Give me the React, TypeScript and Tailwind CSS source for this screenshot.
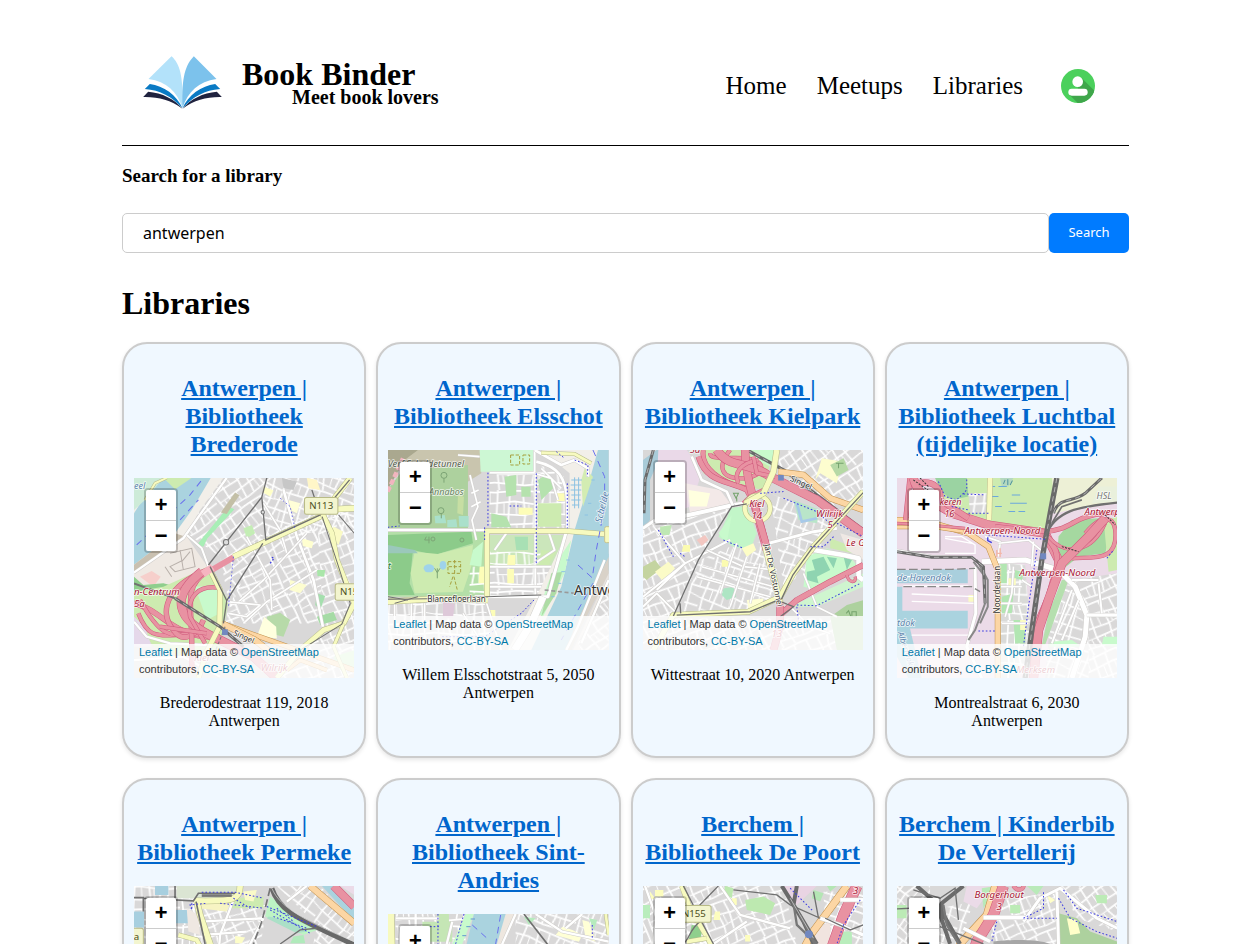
import type { ReactNode } from "react";

/* ---------- map drawing primitives ---------- */

const roadStyles = {
  motorway: { casing: "#d0597c", fill: "#e892a2", width: 20 },
  ramp: { casing: "#d0597c", fill: "#e892a2", width: 10 },
  primary: { casing: "#c08f4a", fill: "#fcd6a4", width: 15 },
  secondary: { casing: "#b5b98a", fill: "#f7fabf", width: 15 },
  street: { casing: "#cfcdca", fill: "#ffffff", width: 9 },
  lane: { casing: "#d2d0ce", fill: "#ffffff", width: 5 },
};

type RoadKind = keyof typeof roadStyles;

function Road({ d, kind = "street", w }: { d: string; kind?: RoadKind; w?: number }) {
  const s = roadStyles[kind];
  const width = w ?? s.width;
  return (
    <g fill="none" strokeLinejoin="round">
      <path d={d} stroke={s.casing} strokeWidth={width + 3} />
      <path d={d} stroke={s.fill} strokeWidth={width} />
    </g>
  );
}

function Area({ d, c }: { d: string; c: string }) {
  return <path d={d} fill={c} />;
}

function Rail({ d, w = 4 }: { d: string; w?: number }) {
  return <path d={d} fill="none" stroke="#707070" strokeWidth={w} />;
}

function MainRail({ d, w = 9 }: { d: string; w?: number }) {
  return (
    <g fill="none">
      <path d={d} stroke="#6a6a6a" strokeWidth={w} />
      <path d={d} stroke="#d8d8d8" strokeWidth={2} strokeDasharray="16 12" />
    </g>
  );
}

function Path({ d, w = 3 }: { d: string; w?: number }) {
  return <path d={d} fill="none" stroke="#3c3ce0" strokeWidth={w} strokeDasharray="5 6" />;
}

function Ferry({ d }: { d: string }) {
  return <path d={d} fill="none" stroke="#6a70ee" strokeWidth={3} strokeDasharray="20 16" />;
}

function Label({
  x,
  y,
  children,
  color = "#a81433",
  size = 29,
  italic = true,
  angle = 0,
  anchor = "start",
}: {
  x: number;
  y: number;
  children: ReactNode;
  color?: string;
  size?: number;
  italic?: boolean;
  angle?: number;
  anchor?: "start" | "middle" | "end";
}) {
  return (
    <text
      x={x}
      y={y}
      fill={color}
      fontSize={size}
      fontFamily="'Noto Sans', sans-serif"
      fontStyle={italic ? "italic" : "normal"}
      textAnchor={anchor}
      transform={`rotate(${angle} ${x} ${y})`}
      stroke="#ffffff"
      strokeOpacity={0.75}
      strokeWidth={5}
      strokeLinejoin="round"
      paintOrder="stroke"
    >
      {children}
    </text>
  );
}

function Shield({ x, y, w, children }: { x: number; y: number; w: number; children: ReactNode }) {
  return (
    <g>
      <rect x={x} y={y} width={w} height={50} rx={6} fill="#f3f5cf" stroke="#b9bb86" strokeWidth={3} />
      <text x={x + w / 2} y={y + 35} textAnchor="middle" fontSize={29} fontFamily="'Noto Sans', sans-serif" fill="#4c4e20">
        {children}
      </text>
    </g>
  );
}

function StreetPatterns() {
  const tiles = [
    { id: "streets-0", angle: 0 },
    { id: "streets-20", angle: 20 },
    { id: "streets-40", angle: 40 },
    { id: "streets-65", angle: 65 },
    { id: "streets-m20", angle: -22 },
    { id: "streets-m35", angle: -35 },
  ];
  return (
    <svg className="absolute size-0" aria-hidden="true">
      <defs>
        {tiles.map((t) => (
          <pattern key={t.id} id={t.id} width={180} height={150} patternUnits="userSpaceOnUse" patternTransform={`rotate(${t.angle})`}>
            <path
              d="M0 8L70 2L180 8M0 40L60 34L128 44L180 40M0 72L92 76M42 104L180 98M0 128L90 136L180 128M10 0L6 72L14 150M46 6L40 104L52 150M84 4L92 76L84 136M118 6L122 44L116 100M150 8L142 42L152 150M118 100L112 132"
              fill="none"
              stroke="#fff"
              strokeWidth={5}
            />
            <path d="M6 104L42 104M92 76L144 66L180 72M64 36L66 74M28 40V72M102 44L104 74M166 8V40M66 104L68 134M132 100L134 130M24 106L28 130" fill="none" stroke="#fff" strokeWidth={3} />
          </pattern>
        ))}
      </defs>
    </svg>
  );
}

/* ---------- maps ---------- */

function BrederodeMap() {
  return (
    <>
      <Area d="M42 24H702V624H42Z" c="#d9d8d8" />
      <Area d="M230 24H460L420 200L330 420L300 260L200 190Z" c="url(#streets-m35)" />
      <Area d="M440 24H702V180L420 200Z" c="url(#streets-20)" />
      <Area d="M420 200L590 130L610 460L310 460L340 380Z" c="url(#streets-65)" />
      <Area d="M590 130H702V624H470L610 470Z" c="url(#streets-m20)" />
      <Area d="M42 24H310L240 120L200 190L42 310Z" c="#f2efe9" />
      <Area d="M42 130L110 24H272L215 120L165 190L42 284Z" c="#aad3df" />
      <Area d="M42 24H130L75 90L42 120Z" c="#cdebd8" />
      <Area d="M130 24H215L165 58Z" c="#cdebb0" />
      <Area d="M42 284L165 190L190 198L60 300L42 305Z" c="#c9c0b0" />
      <Area d="M42 310L200 200L262 290L210 350L100 370L42 350Z" c="#efe9e3" />
      <Area d="M60 320L95 303L122 320L100 350Z" c="#f6cfcb" />
      <Area d="M42 320L70 345L130 340L185 355L150 390L42 370Z" c="#8fce8d" />
      <Area d="M230 225L325 110L343 118L262 205L250 230Z" c="#a8eeb6" />
      <Area d="M302 128L345 68L358 76L320 132Z" c="#c3bfa6" />
      <Area d="M42 365L130 350L262 290L325 390L300 540L190 560L100 530L42 440Z" c="#cdebb0" />
      <Area d="M225 350L290 345L300 430L260 450Z" c="#c8facc" />
      <Area d="M42 440L75 470L95 530H42Z" c="#e5d8ea" />
      <Area d="M440 440L480 428L510 450L490 500L450 490Z" c="#b7daa9" />
      <Area d="M412 495L432 440L468 470L470 505L430 500Z" c="#ffffdf" />
      <Area d="M590 370L615 378L600 420L585 405Z" c="#a5dfae" />
      <Area d="M590 440L640 425L650 450L600 465Z" c="#a5dba5" />
      <Area d="M560 24L590 30L600 60L565 55Z" c="#fff6c8" />
      <Area d="M505 90L540 100L530 130L500 115Z" c="#ffffd8" />
      <Area d="M430 50L460 62L450 80L428 68Z" c="#ffffc8" />
      <Area d="M370 175L395 165L405 190L380 205Z" c="#c4edb5" />
      <Area d="M640 170L668 185L655 225L630 200Z" c="#fbfbc5" />
      <Area d="M545 205L580 215L575 235L548 228Z" c="#ffffd0" />
      <Area d="M590 300L615 300L612 320L592 318Z" c="#a9e6a9" />
      <Area d="M510 330L560 345L540 370L508 360Z" c="#fdfdd0" />
      <Area d="M485 24L530 35L520 60L490 55Z" c="#c7c7c7" />
      <Area d="M640 560L702 540V600H660Z" c="#c8f0c0" />
      <Ferry d="M50 225L150 130L210 75L250 24" />
      <Ferry d="M180 150L235 90" />
      <Road d="M42 308L190 205L250 120L320 24" w={7} />
      <Road d="M75 90L105 40L140 24" kind="secondary" w={6} />
      <g fill="none" stroke="#b8b0aa" strokeWidth={3}>
        <path d="M150 250L215 235L225 290L165 305L150 290L190 270M180 240L190 300M210 245L185 275M135 290L155 320" />
      </g>
      <Road d="M42 455L80 500L150 520L270 525" w={7} />
      <Road d="M200 195L245 235L265 290" w={6} />
      <Road d="M42 570L190 560L300 620" w={7} />
      <Road d="M490 60L530 200L580 330L608 470" w={8} />
      <Road d="M430 100L480 180L500 250" kind="lane" />
      <Road d="M350 400L430 330L560 190" kind="lane" />
      <Road d="M370 460L440 395L590 300" kind="lane" />
      <Road d="M320 395L420 405L380 440L325 430" kind="lane" />
      <Road d="M380 200L450 330L455 420" kind="lane" />
      <Road d="M42 400C130 420 160 510 300 500" kind="motorway" w={14} />
      <Road d="M55 430C90 520 120 490 240 495" kind="ramp" />
      <Road d="M60 390C120 500 150 500 210 490" kind="ramp" />
      <Road d="M262 300C130 350 120 430 160 480C190 525 235 490 250 450" kind="ramp" w={13} />
      <Road d="M260 305C190 350 215 400 215 520V600" kind="motorway" w={13} />
      <Road d="M245 305C150 380 165 450 290 505L400 560L470 624" kind="motorway" w={24} />
      <Road d="M295 353C235 345 200 380 210 440L255 520" kind="ramp" />
      <Road d="M120 470L260 490" kind="ramp" />
      <Road d="M305 460L702 600" kind="primary" w={13} />
      <Road d="M305 460L405 510L455 550" kind="primary" w={17} />
      <Road d="M500 600L540 570L620 600" kind="primary" w={10} />
      <Road d="M270 300L300 360L298 470L260 545L235 624" kind="secondary" w={14} />
      <Road d="M340 260L600 140L690 24" kind="secondary" w={15} />
      <Road d="M600 120L702 115" kind="secondary" w={16} />
      <Road d="M606 130L635 190L650 270L702 400L670 460L610 480L540 540L470 624" kind="secondary" w={14} />
      <Road d="M670 460L640 530L680 624" kind="secondary" w={9} />
      <path d="M275 300L340 262" stroke="#e892a2" strokeWidth={18} />
      <path d="M248 312L278 292" stroke="#f6b4c0" strokeWidth={22} />
      <MainRail d="M165 385L300 470L370 530" />
      <Rail d="M42 340L165 385" w={6} />
      <Rail d="M265 285L318 217L425 82L440 24M425 82L437 210L600 135L688 30M428 220L320 392L270 290M320 392L310 460M600 135L575 60" />
      <Rail d="M606 140L650 275L690 400L665 462L540 540M655 135L702 190" w={3} />
      <path d="M315 470L285 545" stroke="#777" strokeWidth={3} strokeDasharray="10 6" />
      <g fill="#ddd" stroke="#777" strokeWidth={3}>
        <circle cx={318} cy={217} r={8} />
        <circle cx={428} cy={127} r={5} />
      </g>
      <Path d="M480 85L510 110L525 180M340 260L325 410" w={2} />
      <Path d="M450 280L462 265L455 262" w={4} />
      <rect x={306} y={478} width={17} height={17} fill="#7188c0" />
      <Shield x={553} y={83} w={100}>N113</Shield>
      <Shield x={645} y={341} w={100}>N155</Shield>
      <Label x={42} y={58} color="#5b83ad" size={27}>eel</Label>
      <Label x={42} y={375}>n-Centrum</Label>
      <Label x={42} y={411}>5a</Label>
      <Label x={338} y={494} color="#333" italic={false} size={23} angle={24}>Singel</Label>
      <Label x={222} y={572}>Kiel</Label>
      <Label x={422} y={602}>Wilrijk</Label>
    </>
  );
}

function ElsschotMap() {
  return (
    <>
      <Area d="M39 30H702V630H39Z" c="#d9d8d8" />
      <Area d="M39 30H320V100L240 150L39 70Z" c="#c9c5ae" />
      <Area d="M39 150L100 70L180 85L280 75V265H39Z" c="#add19e" />
      <Area d="M39 150L90 60L130 30H39Z" c="#aaa88f" />
      <Area d="M315 30H480V95H318Z" c="#cdf7d4" />
      <Area d="M39 275H335V470H39Z" c="#b4dfa8" />
      <Area d="M39 285L290 275L295 310L180 345L115 330L105 430L120 465H39Z" c="#8ccb8a" />
      <Area d="M120 335L190 342L295 315L290 380L265 455L120 460L108 400Z" c="#cdebb0" />
      <Area d="M39 315L120 330L130 340H39Z" c="#9bc8bb" />
      <Area d="M295 330L325 305L320 380L285 375Z" c="#c8facc" />
      <Area d="M180 228L210 225L215 250H182ZM218 240L245 238L248 262H218ZM252 228H282V260H254Z" c="#aae0cb" />
      <Area d="M250 165L268 170L265 225L248 220Z" c="#c7dea3" />
      <Area d="M345 285H575L530 380H345Z" c="#cbe6bb" />
      <Area d="M345 100H480V265H345Z" c="url(#streets-0)" />
      <Area d="M485 70L570 110L575 265H485Z" c="url(#streets-0)" />
      <Area d="M345 335H520V470H345Z" c="url(#streets-0)" />
      <Area d="M285 380H330V460H285Z" c="url(#streets-0)" />
      <Area d="M39 490H330L360 630H39Z" c="url(#streets-0)" />
      <Area d="M205 485L240 492L235 535H205Z" c="#dec9d9" />
      <Area d="M500 30H700L680 240L600 450L520 630H400L500 440L585 260V100Z" c="#f2efe9" />
      <Area d="M670 30H702V355L590 630H470L560 440L600 270L645 120Z" c="#aad3df" />
      <Area d="M550 360L590 300L570 400L505 530L490 520L520 430Z" c="#c8facc" />
      <Area d="M530 400L562 396L545 460L500 530Z" c="#aedca5" />
      <Area d="M630 85L655 110L625 200L620 120Z" c="#d3ecb2" />
      <Area d="M595 630L702 400V630Z" c="#e9e4df" />
      <Area d="M610 610L702 440V630H620Z" c="#d9d8d8" />
      <Area d="M610 610L702 440V630H620Z" c="url(#streets-m35)" />
      <Area d="M540 630L600 470L702 340V390L600 600L580 630Z" c="#aad3df" />
      <Area d="M600 560L702 350V400L620 560L590 630H575Z" c="#d9d2c8" />
      <Area d="M432 203H474V224H432ZM547 160H570V183H547ZM400 345H422V375H398ZM398 387H418V430H398ZM345 510H362V532H345ZM315 380H328V430H312Z" c="#fdfdb8" />
      <Area d="M390 110L425 105V165L395 170ZM440 140H468V170H440ZM350 220L395 230L410 262H350ZM490 120L520 100L540 140L500 180Z" c="#b5e2ae" />
      <Area d="M490 190H560V260H490ZM500 330L545 335L520 380H490Z" c="#cdebb0" />
      <Area d="M420 290H460V330H425Z" c="#a8e0b4" />
      <g fill="#9fd3ea">
        <ellipse cx={163} cy={385} rx={16} ry={12} />
        <ellipse cx={205} cy={376} rx={10} ry={13} />
      </g>
      <g fill="none" stroke="#a6a13f" strokeWidth={3} strokeDasharray="10 5">
        <path d="M220 365H258V400H220ZM222 380H258M240 360V400M235 410L225 440M238 410L248 450" />
        <path d="M408 45H435V75H408ZM445 45H465V72H445Z" />
      </g>
      <g stroke="#8cc2e2" strokeWidth={3}>
        <path d="M590 120H622M588 135H620M588 150H620M590 165H618M590 180H618M592 195H614M600 112V205M612 112V205" />
        <path d="M640 190H650M630 225H640M575 360H585M560 395H572M550 430H560M530 470H540M650 120H660" />
      </g>
      <g fill="none" stroke="#7da576" strokeWidth={3}>
        <circle cx={208} cy={106} r={9} />
        <path d="M208 115V128M200 222V235" />
        <circle cx={199} cy={212} r={9} />
        <path d="M155 290L150 300H165M163 290V310M188 385V415M180 385L188 398L196 385" />
        <circle cx={175} cy={297} r={6} />
        <circle cx={262} cy={300} r={6} />
      </g>
      <path d="M39 155L85 55" stroke="#f2b5bf" strokeWidth={13} strokeDasharray="16 8" />
      <Road d="M39 270H335" w={8} />
      <Road d="M286 105L310 200L292 240L305 300M290 160L312 150M290 200L318 185M250 45L315 50" kind="lane" />
      <Road d="M345 98H480V30M482 98V470" w={6} />
      <Road d="M485 65C550 80 575 110 578 190V270" kind="street" w={8} />
      <Road d="M480 100L530 115L550 180M500 85L560 145" kind="lane" />
      <Road d="M345 380H530M345 440H500M395 280L360 330M520 270L540 330L480 370" kind="lane" w={6} />
      <Road d="M480 30L560 75L600 60L640 85L640 110" w={8} />
      <Road d="M300 470H520L575 275" w={9} />
      <Road d="M505 470L470 550L420 630" w={22} />
      <Road d="M690 360L610 560L575 630M702 420L620 610" w={7} />
      <Road d="M330 470L380 630M265 520L330 620M60 490V560M110 490V600M150 490V580" kind="lane" />
      <Road d="M337 470V273H575L690 282" kind="secondary" w={14} />
      <Road d="M39 485L200 475L340 480" kind="secondary" w={16} />
      <Road d="M500 38L600 42L650 70" kind="secondary" w={9} />
      <rect x={690} y={260} width={20} height={48} rx={5} fill="#f7fabf" stroke="#c7c390" strokeWidth={3} />
      <Rail d="M39 478L180 476L400 468L500 465M39 470L100 480M60 490L130 470" w={3} />
      <path d="M510 450L600 460" stroke="#999" strokeWidth={5} strokeDasharray="12 8" />
      <Path d="M340 98V262M485 100V370M330 262V300M600 60L640 75L638 110M405 198H440M39 262L75 258M545 35L570 55M578 130V265M478 480L440 520L330 590L200 590" />
      <Ferry d="M655 30L690 110V200L665 330L655 400M610 375L660 420M655 430L560 600" />
      <Label x={39} y={80} color="#55614f" size={28}>Verf Scheldetunnel</Label>
      <Label x={163} y={165} color="#66825d" size={27}>Annabos</Label>
      <Label x={680} y={250} color="#5b83ad" size={28} angle={-76}>Schelde</Label>
      <Label x={39} y={388} color="#1f7a3d">t</Label>
      <Label x={158} y={486} color="#333" italic={false} size={24}>Blancefloerlaan</Label>
      <Label x={598} y={466} color="#333" italic={false} size={42}>Antwerpen</Label>
    </>
  );
}

function KielparkMap() {
  return (
    <>
      <Area d="M39 30H699V630H39Z" c="#d9d8d8" />
      <Area d="M39 250L300 200L210 360L130 530H39Z" c="url(#streets-m20)" />
      <Area d="M300 320L420 300L450 480L380 510L150 520L210 360Z" c="url(#streets-20)" />
      <Area d="M420 160L620 240L520 400L460 440Z" c="url(#streets-20)" />
      <Area d="M440 30H699V180L600 200L450 90Z" c="url(#streets-m35)" />
      <Area d="M39 535H699V630H39Z" c="url(#streets-m20)" />
      <Area d="M39 60L80 30H100L60 120V240L39 270Z" c="#a9cbd8" />
      <Area d="M85 30H170L215 100L180 200L75 240Z" c="#ead9e8" />
      <Area d="M165 130L270 150L300 190L180 220Z" c="#f3e9e8" />
      <Area d="M175 150L240 160L230 200L180 200Z" c="#ffffdf" />
      <Area d="M210 30H430L400 150L300 130L220 100Z" c="#cdebb0" />
      <Area d="M345 30H440L420 80L380 60Z" c="#c8facc" />
      <Area d="M305 200L350 195L380 280L360 330L310 320L265 290Z" c="#c2f6c8" />
      <Area d="M265 280L305 225L290 310Z" c="#c8facc" />
      <Area d="M200 300L225 285L235 300L215 318Z" c="#f3c7c1" />
      <Area d="M90 260L125 255L118 285L92 285Z" c="#bfe8b4" />
      <Area d="M39 380L75 360L95 385L50 420L39 410Z" c="#c4d4a0" />
      <Area d="M75 395L115 365L135 385L100 425Z" c="#fbfbc7" />
      <Area d="M160 315H180V335H155ZM275 360H295V380H275Z" c="#fbfbb0" />
      <Area d="M335 325L370 310L378 330L350 350Z" c="#fdfdc6" />
      <Area d="M280 445L310 440L318 470L290 480L275 465Z" c="#aee5c4" />
      <Area d="M350 480L400 475L395 500L355 505Z" c="#ffffd6" />
      <Area d="M490 180L570 210L560 250L505 240Z" c="#b9e5c9" />
      <path d="M500 190L515 245L560 235" fill="none" stroke="#a7c9e8" strokeWidth={8} />
      <Area d="M575 55L635 65L620 130L570 100L555 120Z" c="#fdfdcf" />
      <Area d="M600 75L640 55L655 90L620 110Z" c="#b6d9a5" />
      <Area d="M530 350L590 325L660 350L690 390L560 450L520 440Z" c="#c8facc" />
      <Area d="M545 360L580 350L600 390L560 410ZM590 350L620 355L610 385ZM530 395L555 390L565 430L530 420ZM640 350L665 360L650 390Z" c="#8fd4b1" />
      <Area d="M600 295L640 310L690 345L600 325Z" c="#cdebb0" />
      <Area d="M480 500L699 400V440L560 500Z" c="#cff5cf" />
      <Area d="M600 530L650 495L699 480V630H620Z" c="#add19e" />
      <Area d="M630 280L699 300V360L650 330Z" c="#efe8e4" />
      <MainRail d="M350 30L460 90L699 270" w={10} />
      <MainRail d="M70 30L45 120L42 220" w={9} />
      <Road d="M60 250L200 220L310 195L350 190" w={12} />
      <Road d="M39 265L75 240" w={9} />
      <Road d="M185 50L215 120L290 155L310 200" w={8} />
      <Road d="M75 265L165 370L80 450M165 370L300 300M39 470L165 370M140 520L80 460L39 500" w={6} />
      <Road d="M395 315L550 275L620 265" w={9} />
      <Road d="M550 330L640 345L685 355V410L699 420" w={14} />
      <Road d="M230 330L340 380L440 390M215 380L430 440M200 410L420 470" kind="lane" />
      <Road d="M320 310L270 460M350 350L300 500M390 370L360 490" kind="lane" />
      <Road d="M520 400L560 500L620 530M470 490L540 560L600 580" kind="lane" />
      <Road d="M220 30C210 80 270 130 350 145" kind="ramp" w={12} />
      <Road d="M205 50C230 130 290 120 350 150L372 190" kind="ramp" w={14} />
      <Road d="M300 30C260 80 270 120 345 115C400 110 420 60 340 55C280 50 240 60 240 40" kind="ramp" />
      <Road d="M345 30C345 100 360 130 372 190L410 330" kind="motorway" w={22} />
      <Road d="M260 30C300 90 350 60 420 110L560 180L699 280" kind="motorway" w={24} />
      <Road d="M385 60C330 70 310 100 325 130" kind="ramp" />
      <Road d="M400 150L360 170L340 190" kind="ramp" />
      <Road d="M435 110L380 100L370 50" kind="ramp" />
      <Road d="M699 375L600 425L500 480L450 525" kind="motorway" w={15} />
      <Road d="M650 405C655 430 680 430 675 410" kind="ramp" w={7} />
      <Road d="M450 490V560L430 630" kind="motorway" w={20} />
      <Road d="M445 95L520 105L600 175L699 210" kind="primary" w={16} />
      <circle cx={382} cy={205} r={38} fill="none" stroke="#b5b98a" strokeWidth={15} />
      <circle cx={382} cy={205} r={38} fill="none" stroke="#f7fabf" strokeWidth={12} />
      <Road d="M440 30L430 95L400 160L345 190" kind="secondary" w={16} />
      <Road d="M372 190L410 320" kind="motorway" w={18} />
      <Road d="M405 315L450 490" kind="secondary" w={18} />
      <Road d="M699 155L550 320L490 400L450 470L355 515L130 525L70 630" kind="secondary" w={15} />
      <Rail d="M350 192L305 200L205 360L130 528M699 158L545 325L488 405L455 475L360 515L140 525M150 490L152 520M440 480L490 500L450 530" w={4} />
      <Path d="M280 300L340 325M460 175L560 215L610 260M620 250L699 290M500 495L560 497L690 430M610 290L580 320L540 320M500 500L505 540M85 270L130 350M150 340L165 350M390 160L460 155" />
      <rect x={444} y={105} width={17} height={17} fill="#7188c0" />
      <g fill="none" stroke="#74a26c" strokeWidth={3}>
        <path d="M310 160H325L318 175ZM320 175V185M617 70H640M625 70V85M648 520L655 512L662 530M665 515H678V530H665Z" />
      </g>
      <Label x={178} y={40}>5a</Label>
      <Label x={380} y={202} anchor="middle">Kiel</Label>
      <Label x={380} y={236} anchor="middle">14</Label>
      <Label x={598} y={230} anchor="middle">Wilrijk</Label>
      <Label x={600} y={265} anchor="middle">5</Label>
      <Label x={648} y={317}>Le Grellelaan</Label>
      <Label x={478} y={122} color="#333" italic={false} size={24} angle={24}>Singel</Label>
      <Label x={402} y={314} color="#333" italic={false} size={24} angle={78}>Jan De Vostunnel</Label>
      <Label x={440} y={560} anchor="middle">Vosges</Label>
      <Label x={440} y={592} anchor="middle">13</Label>
    </>
  );
}

function LuchtbalMap() {
  return (
    <>
      <Area d="M36 24H696V624H36Z" c="#ebdbe8" />
      <Area d="M160 24H520L480 190L330 170L180 110Z" c="#cdebb0" />
      <Area d="M150 24H245L250 80L200 90L165 60Z" c="#9bd3a2" />
      <Area d="M250 70H305V130H255Z" c="#d9d8d8" />
      <Area d="M250 70H305V130H255Z" c="url(#streets-0)" />
      <Area d="M500 24H696V100L600 110L510 130Z" c="#edf0d6" />
      <Area d="M640 50H696V95L620 100Z" c="#e9f0dc" />
      <Area d="M345 24H385L370 50H350Z" c="#b5d8c0" />
      <Area d="M520 200L560 150L640 145L680 170L660 250L580 260L530 300L515 270Z" c="#a5d8a0" />
      <Area d="M655 150L696 140V300L670 305Z" c="#cdebb0" />
      <Area d="M340 275L420 285L440 530L400 624H345Z" c="#d9dad8" />
      <Area d="M340 275L420 285L440 530L400 624H345Z" c="url(#streets-0)" />
      <Area d="M345 275H365V340H345ZM350 380L385 370L380 430L350 430ZM390 300L412 305V330L388 325ZM385 450H420V520H390Z" c="#b2e6b2" />
      <Area d="M405 450H422V480H405ZM370 325H392V345H370ZM250 375H268V395H250Z" c="#fbfbc2" />
      <Area d="M500 400L560 330L696 310V624H480Z" c="#d9d8d8" />
      <Area d="M500 400L560 330L610 420V624H480Z" c="url(#streets-20)" />
      <Area d="M560 330L696 310V624H610V430Z" c="url(#streets-m20)" />
      <Area d="M490 430L530 330L550 330L500 470L480 524H470Z" c="#b5dfae" />
      <Area d="M655 500L696 500V530L650 525ZM500 515L560 510L590 530H490Z" c="#c8facc" />
      <Area d="M36 300H165V298H248V340H36Z" c="#a9cfdd" />
      <Area d="M36 350H52V422H248V475H75L110 624H70L36 560Z" c="#aad3df" />
      <g fill="none" stroke="#6ba8dc" strokeWidth={3}>
        <path d="M340 50H365M320 80H340M380 75H405M375 100H425M330 110H350M370 125H390M400 125H420M310 50H330" />
      </g>
      <path d="M355 42L360 30M368 45V28M375 45L382 32" stroke="#4f93a0" strokeWidth={3} />
      <g fill="none" stroke="#fff" strokeWidth={4}>
        <path d="M80 372L268 380M80 394L268 400M80 495H250M180 205L260 220M180 250H270V225L230 200H180M36 320H80M55 348H250" />
      </g>
      <Road d="M36 240L140 258L250 262" w={5} />
      <Road d="M270 290L272 430L245 530L290 624" w={9} />
      <Road d="M290 275L420 270L520 300L570 350L605 435L600 500L560 624" w={15} />
      <Road d="M605 435H696" w={10} />
      <Road d="M300 200L345 215L340 260" w={6} />
      <Road d="M385 290L380 370L360 440M345 350H410M345 400H410M350 460H430M410 330L440 350" kind="lane" />
      <Road d="M340 220L430 210L480 250M445 215L440 290" kind="lane" />
      <Road d="M560 360L500 520M580 390L530 510M640 340L650 430M560 330L640 330" kind="lane" w={6} />
      <g fill="none" stroke="#888" strokeWidth={6}>
        <path d="M36 298H200L270 295M55 350H260L285 365" strokeDasharray="26 10" strokeWidth={4} />
        <path d="M265 275L300 320V400L270 480L250 510M275 270L308 330V410L285 460" />
      </g>
      <MainRail d="M36 245L140 262L260 262L295 290L300 400" w={9} />
      <Road d="M315 24L312 150" kind="secondary" w={14} />
      <Road d="M36 150H110L250 190L310 230L338 300V624" kind="primary" w={15} />
      <Road d="M36 172H150L235 185" kind="primary" w={9} />
      <Road d="M75 24L62 150" kind="motorway" w={13} />
      <Road d="M85 24C100 90 160 100 200 130L310 165L480 190L530 290" kind="motorway" w={24} />
      <Road d="M100 40C150 30 170 60 165 90L250 145" kind="motorway" w={16} />
      <Road d="M36 160L130 165L240 175" kind="ramp" w={6} />
      <Road d="M330 170L480 185C560 180 560 140 660 130L696 128" kind="ramp" w={12} />
      <Road d="M480 190C500 230 520 230 515 290L490 380L455 460L440 624" kind="motorway" w={15} />
      <Road d="M490 200C540 260 620 250 660 160" kind="ramp" w={8} />
      <Road d="M560 265C620 260 700 280 690 180C685 140 650 130 600 190" kind="ramp" />
      <Road d="M660 145L610 200L530 280L490 390L460 480L445 624" kind="motorway" w={25} />
      <MainRail d="M515 24L495 130L470 270L450 410L420 624" w={16} />
      <MainRail d="M505 130C520 80 560 100 600 70L650 24" w={9} />
      <Rail d="M480 200C510 120 580 110 696 98" w={7} />
      <Rail d="M500 160L530 110L590 90" w={5} />
      <g stroke="#333" strokeWidth={3} strokeDasharray="6 4">
        <path d="M85 30L135 65M105 24L130 50M660 135L690 165M530 230L580 245" />
      </g>
      <Path d="M160 35L180 80L215 90L245 60V24M235 72L300 75M250 130H310M310 195L480 208M455 240L430 410L415 530M280 483H330M665 265L685 240M200 110L250 120" />
      <path d="M308 202V212L320 218" fill="none" stroke="#3c3ce0" strokeWidth={4} />
      <rect x={465} y={250} width={18} height={18} fill="#7188c0" />
      <path d="M335 240V262M345 235V262M335 250H350" stroke="#f3b6a8" strokeWidth={4} />
      <Label x={164} y={106} size={27}>keren</Label>
      <Label x={178} y={141} size={27}>16</Label>
      <Label x={238} y={191}>Antwerpen-Noord</Label>
      <Label x={403} y={317}>Antwerpen-Noord</Label>
      <Label x={598} y={136}>Antwerpen</Label>
      <Label x={634} y={86} color="#777" size={27}>HSL</Label>
      <Label x={36} y={334} color="#5b83ad" size={28}>de Havendok</Label>
      <Label x={36} y={469} color="#5b83ad" size={27}>tdok</Label>
      <Label x={38} y={488} color="#5b83ad" size={25} angle={72}>Albertdok</Label>
      <Label x={345} y={430} color="#333" italic={false} size={24} angle={-90}>Noorderlaan</Label>
      <Label x={393} y={608}>Merksem</Label>
    </>
  );
}

function PermekeMap() {
  return (
    <>
      <Area d="M42 333H702V933H42Z" c="#d9d8d8" />
      <Area d="M42 333H240L250 507V933H42Z" c="url(#streets-0)" />
      <Area d="M250 390H440L420 520L500 933H250Z" c="url(#streets-m20)" />
      <Area d="M470 333H600L702 450V933H500L590 450Z" c="url(#streets-40)" />
      <Area d="M105 333H145V360H105ZM42 410H72V458H42ZM165 405H205V445H165Z" c="#a7cfdf" />
      <Area d="M170 333H360L340 385H235L225 370H170Z" c="#dbe5d3" />
      <Area d="M325 370L430 365V400H330Z" c="#cdebb0" />
      <Area d="M240 380L330 385L320 410L235 400Z" c="#f7f4c3" />
      <Area d="M370 350L410 345L400 380L375 375Z" c="#fafac8" />
      <Area d="M450 365L590 465L550 480L435 425Z" c="#bdf4c4" />
      <Area d="M445 425L520 440L560 470L530 475L440 430Z" c="#abe0c7" />
      <Area d="M520 485L550 480L555 505H510Z" c="#b0eabb" />
      <Area d="M605 333H640L702 400V440Z" c="#aad3df" />
      <Area d="M660 333H702V360Z" c="#ebdbe8" />
      <Area d="M345 483L375 488L365 505H345Z" c="#fdfdc8" />
      <Area d="M200 400L235 420L240 480L205 470Z" c="#efe8e2" />
      <Road d="M570 333L702 445" kind="primary" w={18} />
      <Road d="M640 333L702 395" kind="motorway" w={22} />
      <Road d="M340 375L300 480L290 600M430 430L390 507L360 600M240 440L430 430M250 480L380 470M500 380L560 333" w={7} />
      <Road d="M360 333C360 375 340 380 230 378L240 420L270 507L300 650" kind="secondary" w={17} />
      <Road d="M175 480L230 495L250 530" kind="secondary" w={12} />
      <Rail d="M42 368H70V410M70 370L220 378L235 355H345M228 380L255 507M165 333V370" w={5} />
      <path d="M245 362H335" stroke="#777" strokeWidth={8} />
      <path d="M455 340C480 420 560 440 702 510" fill="none" stroke="#696969" strokeWidth={15} />
      <path d="M455 340C480 400 560 440 702 500" fill="none" stroke="#ddd" strokeWidth={2} />
      <path d="M450 340L425 440L400 507" fill="none" stroke="#777" strokeWidth={5} strokeDasharray="24 10" />
      <Rail d="M590 460L540 465L480 507" w={4} />
      <Path d="M245 352H345L430 370M300 385L430 400M340 370L390 400M440 395L590 455M450 405L570 475M460 425L560 460M215 385V405L210 390L260 385M470 400L520 440" />
      <Shield x={-10} y={460} w={80}>N1a</Shield>
    </>
  );
}

function SintAndriesMap() {
  return (
    <>
      <Area d="M806 417H1469V1017H806Z" c="#d9d8d8" />
      <Area d="M830 417H1040V1017H830Z" c="url(#streets-0)" />
      <Area d="M1190 417H1469V1017H1190Z" c="url(#streets-20)" />
      <Area d="M910 440H1000V500H910ZM955 417H990V460H955Z" c="#c5e6b5" />
      <Area d="M1040 417H1065L1030 507H1000Z" c="#c8facc" />
      <Area d="M1065 417H1175L1140 520L1080 700H980L1040 520Z" c="#aad3df" />
      <Area d="M1160 417H1195L1150 520H1130Z" c="#eee7df" />
      <Area d="M1330 455L1360 465L1390 480L1380 500L1310 480ZM1390 435L1410 440L1430 500L1400 490Z" c="#ffffd6" />
      <Area d="M1215 425L1250 430L1230 450ZM1410 430L1435 435L1425 465Z" c="#b6ebbd" />
      <Road d="M890 417V540M830 430H960M1000 440L960 600" w={7} />
      <Road d="M815 417L820 620" kind="secondary" w={20} />
      <Road d="M1190 417L1150 507L1080 700M1250 417L1330 470L1469 500M1390 417L1340 460" w={7} />
      <Road d="M1460 417L1469 480" kind="secondary" w={8} />
      <Rail d="M1215 417L1285 507L1330 600" w={5} />
      <Ferry d="M1145 420L1130 507L1080 650M1060 450L1110 495" />
      <Path d="M957 417V507M900 455L960 455M1420 450V490M1035 417L1010 507" />
      <g stroke="#5f9bd0" strokeWidth={3}>
        <path d="M1055 432H1068M1042 455H1055M1030 482H1042" />
      </g>
    </>
  );
}

function PoortMap() {
  return (
    <>
      <Area d="M39 333H699V933H39Z" c="#d9d8d8" />
      <Area d="M39 333H160L250 507V933H39Z" c="url(#streets-65)" />
      <Area d="M170 333H460L500 507V933H250Z" c="url(#streets-m20)" />
      <Area d="M580 350H699V933H600Z" c="url(#streets-20)" />
      <Area d="M460 333H560L500 390Z" c="#e9d4e3" />
      <Area d="M285 333L310 340L305 370L280 355ZM345 375L400 365L435 385L420 420L350 405Z" c="#bde9b0" />
      <Area d="M550 345L580 355L570 380L545 370ZM590 333H620L600 350Z" c="#b4e6b4" />
      <Area d="M75 345H100V365H75ZM305 370H320V390H305ZM255 410H270V435H250ZM345 480H360V500H345ZM60 350L75 370L60 375Z" c="#fdfdbe" />
      <Area d="M185 450L220 455L210 495L175 500Z" c="#8fcf8d" />
      <Area d="M39 390H60V430H39ZM640 470H665V507H620Z" c="#b9edbc" />
      <Area d="M560 460L600 440V507H545Z" c="#f1e4df" />
      <Road d="M45 333L80 430L70 507M350 440L250 507M270 333L330 420L480 460" w={7} />
      <Road d="M155 333L180 400L250 520" kind="secondary" w={13} />
      <Road d="M230 490L170 500" kind="secondary" w={12} />
      <Road d="M650 333L545 475L500 560" kind="primary" w={20} />
      <Road d="M680 333L640 420L590 560" kind="motorway" w={30} />
      <Road d="M630 375H699" w={11} />
      <Road d="M570 430L630 450L699 480" w={10} />
      <Rail d="M160 333L220 450L250 507M265 333L200 400M310 345L440 360L480 390L570 430M550 350L565 430M210 440C180 460 180 490 160 507M585 430L660 465L699 450" w={4} />
      <path d="M455 333L490 390L560 507M500 333L490 390L520 440L550 507" fill="none" stroke="#6a6a6a" strokeWidth={12} />
      <path d="M510 420L580 560M490 385L500 450L560 507" fill="none" stroke="#777" strokeWidth={7} />
      <path d="M480 370L550 490" fill="none" stroke="#ddd" strokeWidth={2} />
      <Path d="M690 375L640 450L620 507M480 340L550 410" w={3} />
      <circle cx={536} cy={478} r={12} fill="#7188c0" />
      <Shield x={140} y={392} w={103}>N155</Shield>
      <Label x={668} y={357}>3</Label>
    </>
  );
}

function VertellerijMap() {
  return (
    <>
      <Area d="M801 333H1461V933H801Z" c="#d9d8d8" />
      <Area d="M801 333H900V507L860 933H801Z" c="url(#streets-40)" />
      <Area d="M930 400L1030 380L990 507V933H900Z" c="url(#streets-20)" />
      <Area d="M1090 380L1280 350V500L1200 933H1050Z" c="url(#streets-m20)" />
      <Area d="M1290 333H1461V470L1340 430Z" c="url(#streets-m35)" />
      <Area d="M1010 333H1090L1040 400L1000 380Z" c="#ebdbe8" />
      <Area d="M1055 340L1100 333L1060 400ZM1190 333H1240L1220 360Z" c="#b9eab9" />
      <Area d="M1285 415L1340 430L1380 470L1461 500V700H1285Z" c="#add19e" />
      <Area d="M1310 430L1340 435L1350 475L1320 480ZM1250 360L1275 375L1260 385Z" c="#ffffc9" />
      <Area d="M801 390H830V430H801ZM1140 390H1170V415H1140ZM1395 360H1430V385H1400Z" c="#bcebb6" />
      <Area d="M1090 500C1120 495 1220 490 1260 507H1090Z" c="#a6a6a6" />
      <Road d="M1180 440L1230 370L1290 340L1400 430L1461 460M1280 350L1285 507" w={9} />
      <Road d="M1095 333L1070 420L990 507L960 600" kind="primary" w={20} />
      <Road d="M1120 333L1090 420L1040 500L1010 600" kind="motorway" w={30} />
      <Road d="M1150 333C1160 350 1180 345 1180 333" kind="ramp" />
      <Road d="M1060 428H1185" w={12} />
      <Road d="M1000 460L1080 500" w={10} />
      <path d="M860 333L930 395V420L960 507M1000 333L935 385V410L990 507" fill="none" stroke="#6b6b6b" strokeWidth={12} />
      <path d="M940 390L950 450L1000 530" fill="none" stroke="#777" strokeWidth={7} />
      <Rail d="M801 402L840 400M850 345L930 370L975 340L985 435M930 455L1060 507" w={4} />
      <Path d="M1180 430L1240 400V350M1285 370L1320 430L1400 470L1461 490M1300 345L1340 400L1461 440M1100 440L1085 500M1190 430H1280" />
      <Label x={1107} y={369} anchor="middle">Borgerhout</Label>
      <Label x={1107} y={405} anchor="middle">3</Label>
    </>
  );
}

/* ---------- data ---------- */

interface Library {
  name: string;
  address: string;
  viewBox: string;
  drawing: ReactNode;
}

const libraries: Library[] = [
  { name: "Antwerpen | Bibliotheek Brederode", address: "Brederodestraat 119, 2018 Antwerpen", viewBox: "42 24 660 600", drawing: <BrederodeMap /> },
  { name: "Antwerpen | Bibliotheek Elsschot", address: "Willem Elsschotstraat 5, 2050 Antwerpen", viewBox: "39 30 663 600", drawing: <ElsschotMap /> },
  { name: "Antwerpen | Bibliotheek Kielpark", address: "Wittestraat 10, 2020 Antwerpen", viewBox: "39 30 660 600", drawing: <KielparkMap /> },
  { name: "Antwerpen | Bibliotheek Luchtbal (tijdelijke locatie)", address: "Montrealstraat 6, 2030 Antwerpen", viewBox: "36 24 660 600", drawing: <LuchtbalMap /> },
  { name: "Antwerpen | Bibliotheek Permeke", address: "De Coninckplein 25-26, 2060 Antwerpen", viewBox: "42 333 660 600", drawing: <PermekeMap /> },
  { name: "Antwerpen | Bibliotheek Sint-Andries", address: "Kloosterstraat 15, 2000 Antwerpen", viewBox: "806 417 663 600", drawing: <SintAndriesMap /> },
  { name: "Berchem | Bibliotheek De Poort", address: "Willem Van Laarstraat 15, 2600 Berchem", viewBox: "39 333 660 600", drawing: <PoortMap /> },
  { name: "Berchem | Kinderbib De Vertellerij", address: "Sint-Lambertusstraat 7, 2600 Berchem", viewBox: "801 333 660 600", drawing: <VertellerijMap /> },
];

/* ---------- page parts ---------- */

function Logo() {
  return (
    <svg viewBox="69 48 236 159" className="h-[53px] w-[79px] shrink-0" aria-hidden="true">
      <path d="M69 171L84 155C125 158 165 178 187 206C150 180 115 170 69 171Z" fill="#20233f" />
      <path d="M305 171L290 155C249 158 209 178 187 206C224 180 259 170 305 171Z" fill="#20233f" />
      <path d="M74 147L89 132C130 137 170 165 187 205C155 170 120 150 74 147Z" fill="#0a7ac4" />
      <path d="M300 147L285 132C244 137 204 165 187 205C219 170 254 150 300 147Z" fill="#0a7ac4" />
      <path d="M85 117L154 49C178 70 190 105 187 203C170 155 140 125 85 117Z" fill="#b3e2fa" />
      <path d="M289 117L221 49C196 75 184 110 187 203C204 155 235 125 289 117Z" fill="#7cc2ec" />
    </svg>
  );
}

function Avatar() {
  return (
    <svg viewBox="0 0 102 102" className="size-[34px]" aria-hidden="true">
      <defs>
        <clipPath id="avatar-disc">
          <circle cx={51} cy={51} r={51} />
        </clipPath>
      </defs>
      <g clipPath="url(#avatar-disc)">
        <rect width={102} height={102} fill="#4bd05c" />
        <path d="M62 27L102 67V102H50L26 78L50 60Z" fill="#3fa64b" />
      </g>
      <circle cx={50} cy={38} r={16} fill="#fff" />
      <rect x={22} y={59} width={58} height={21} rx={10} fill="#fff" />
    </svg>
  );
}

function LeafletMap({ viewBox, label, children }: { viewBox: string; label: string; children: ReactNode }) {
  return (
    <div className="relative h-[200px] overflow-hidden bg-[#dddddd]">
      <svg viewBox={viewBox} preserveAspectRatio="xMidYMid slice" className="size-full" role="img" aria-label={`Map of ${label}`}>
        {children}
      </svg>
      <div className="absolute top-2.5 left-2.5 flex flex-col rounded-[4px] border-2 border-black/20 bg-clip-padding font-['Liberation_Mono',monospace] text-[22px] font-bold text-black">
        <button type="button" aria-label="Zoom in" className="flex h-[31px] w-[30px] items-center justify-center rounded-t-[2px] border-b border-[#cccccc] bg-white pt-[3px]">
          +
        </button>
        <button type="button" aria-label="Zoom out" className="flex size-[30px] items-center justify-center rounded-b-[2px] bg-white pt-[3px]">
          −
        </button>
      </div>
      <div className="absolute inset-x-0 bottom-0 bg-white/80 px-[5px] text-left font-['Liberation_Sans',sans-serif] text-[11px] leading-[17px] text-[#333333]">
        <a href="#leaflet" className="text-[#0078a8]">Leaflet</a> | Map data ©{" "}
        <a href="#openstreetmap" className="text-[#0078a8]">OpenStreetMap</a> contributors,{" "}
        <a href="#license" className="text-[#0078a8]">CC-BY-SA</a>
      </div>
    </div>
  );
}

function LibraryCard({ library }: { library: Library }) {
  return (
    <article className="rounded-[25px] border-2 border-[#cccccc] bg-[#f0f8ff] p-2.5 text-center shadow-[0_2px_4px_rgba(0,0,0,0.1)]">
      <h2 className="my-5 text-[24px] leading-[28px] font-bold">
        <a href="#library" className="text-[#0066cc] underline">
          {library.name}
        </a>
      </h2>
      <LeafletMap viewBox={library.viewBox} label={library.name}>
        {library.drawing}
      </LeafletMap>
      <p className="my-4 px-1 text-[16px] leading-[18px]">{library.address}</p>
    </article>
  );
}

export default function App() {
  return (
    <div className="bg-white pr-[121px] pb-10 pl-[122px] font-['Liberation_Serif',serif] text-black">
      <StreetPatterns />
      <header className="flex items-start justify-between border-b border-black pt-14 pr-[34px] pb-9 pl-[21px]">
        <a href="#home" className="flex items-start gap-5">
          <Logo />
          <div className="pt-1 font-bold">
            <div className="text-[32px] leading-[28px]">Book Binder</div>
            <div className="pl-[50px] text-[20px] leading-[18px]">Meet book lovers</div>
          </div>
        </a>
        <nav className="flex items-center gap-[30px] pt-3 text-[25px] leading-[36px]">
          <a href="#home">Home</a>
          <a href="#meetups">Meetups</a>
          <a href="#libraries">Libraries</a>
          <a href="#profile" aria-label="Profile" className="pl-2">
            <Avatar />
          </a>
        </nav>
      </header>

      <main>
        <form onSubmit={(e) => e.preventDefault()}>
          <h3 className="pt-[19px] pb-[26px] text-[19px] leading-[22px] font-bold">
            <label htmlFor="library-search">Search for a library</label>
          </h3>
          <div className="flex h-10 font-['Noto_Sans',sans-serif]">
            <input
              id="library-search"
              type="text"
              defaultValue="antwerpen"
              className="min-w-0 flex-1 rounded-[5px] border border-[#cccccc] px-5 text-[16px] outline-none"
            />
            <button type="submit" className="w-20 rounded-[5px] bg-[#007bff] text-[13px] text-white">
              Search
            </button>
          </div>
        </form>

        <h1 className="pt-8 pb-5 text-[32px] leading-[37px] font-bold">Libraries</h1>
        <section className="grid grid-cols-4 gap-x-2.5 gap-y-5">
          {libraries.map((library) => (
            <LibraryCard key={library.name} library={library} />
          ))}
        </section>
      </main>
    </div>
  );
}
